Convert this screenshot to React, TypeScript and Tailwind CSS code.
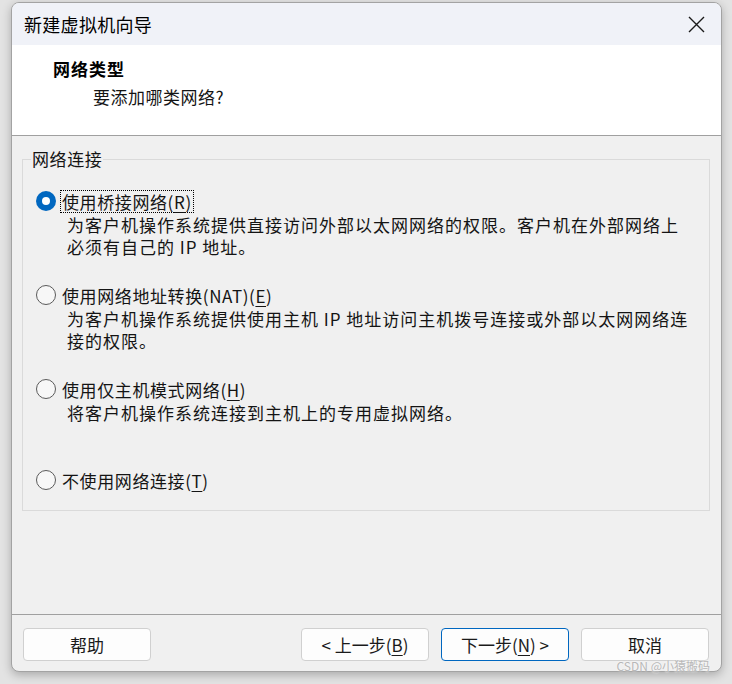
import React from 'react';

const font = { fontFamily: '"Noto Sans CJK SC", "Noto Sans", sans-serif' };

function Radio({ checked }: { checked?: boolean }) {
  if (checked) {
    return (
      <span className="w-[20px] h-[20px] rounded-full bg-[#0067c0] flex items-center justify-center shrink-0">
        <span className="w-[8px] h-[8px] rounded-full bg-white" />
      </span>
    );
  }
  return <span className="w-[20px] h-[20px] rounded-full border border-[#5a5a5a] bg-[#f7f7f7] shrink-0" />;
}

interface OptionProps {
  label: string;
  keyChar: string;
  checked?: boolean;
  focused?: boolean;
  lines?: string[];
}

function Option({ label, keyChar, checked, focused, lines }: OptionProps) {
  return (
    <div>
      <div className="flex items-center h-[22px] pl-[13px]">
        <Radio checked={checked} />
        <span
          className={
            'ml-[4px] px-[1px] leading-[21px] tracking-[0.6px] ' +
            (focused ? 'border border-dotted border-black' : 'border border-transparent')
          }
        >
          {label}(<span className="underline underline-offset-[3px]">{keyChar}</span>)
        </span>
      </div>
      {lines && (
        <div className="mt-[2px] pl-[44px] leading-[22px] tracking-[1px]">
          {lines.map((l, i) => (
            <React.Fragment key={l}>
              {i > 0 && <br />}
              {l}
            </React.Fragment>
          ))}
        </div>
      )}
    </div>
  );
}

function Button({ children, primary }: { children: React.ReactNode; primary?: boolean }) {
  return (
    <div
      className={
        'w-[128px] h-[33px] rounded-[4px] bg-[#fdfdfd] flex items-center justify-center text-[17px] text-[#1a1a1a] ' +
        (primary ? 'border border-[#0067c0]' : 'border border-[#d0d0d0]')
      }
    >
      {children}
    </div>
  );
}

export default function App() {
  return (
    <div className="relative w-[732px] h-[684px] bg-[#e3e3e3] pt-[2px] pl-[11px] overflow-hidden" style={font}>
      <div className="w-[711px] h-[670px] rounded-[8px] border border-[#a3a3a3] overflow-hidden flex flex-col bg-[#f0f0f0] shadow-[0_3px_10px_rgba(0,0,0,0.25)] text-[#141414]">
        {/* title bar */}
        <div className="h-[42px] bg-[#f0f2f8] flex items-center justify-between pl-[12px] pr-[16px]">
          <span className="text-[18px] tracking-[0.3px] text-black">新建虚拟机向导</span>
          <svg width="17" height="17" viewBox="0 0 17 17" className="mt-[1px]">
            <path d="M1 1 L16 16 M16 1 L1 16" stroke="#1a1a1a" strokeWidth="1.4" fill="none" />
          </svg>
        </div>

        {/* header */}
        <div className="h-[91px] bg-white border-b border-[#a0a0a0] pt-[13px]">
          <div className="pl-[41px] leading-[22px] text-[17px] font-bold tracking-[1px] text-black">网络类型</div>
          <div className="pl-[81px] mt-[6px] leading-[22px] text-[17px] tracking-[0.5px]">要添加哪类网络?</div>
        </div>

        {/* body */}
        <div className="h-[478px] pt-[23px] pl-[10px] pr-[11px] text-[17px]">
          <div className="relative border border-[#dadada] pt-[30px] pb-[19px]">
            <span className="absolute -top-[12px] left-[8px] px-[1px] bg-[#f0f0f0] leading-[22px] tracking-[0.6px]">
              网络连接
            </span>
            <div className="flex flex-col">
              <Option
                label="使用桥接网络"
                keyChar="R"
                checked
                focused
                lines={['为客户机操作系统提供直接访问外部以太网网络的权限。客户机在外部网络上', '必须有自己的 IP 地址。']}
              />
              <div className="h-[26px]" />
              <Option
                label="使用网络地址转换(NAT)"
                keyChar="E"
                lines={['为客户机操作系统提供使用主机 IP 地址访问主机拨号连接或外部以太网网络连', '接的权限。']}
              />
              <div className="h-[26px]" />
              <Option label="使用仅主机模式网络" keyChar="H" lines={['将客户机操作系统连接到主机上的专用虚拟网络。']} />
              <div className="h-[45px]" />
              <Option label="不使用网络连接" keyChar="T" />
            </div>
          </div>
        </div>

        {/* footer */}
        <div className="flex-1 border-t border-[#a0a0a0] pt-[13px] pl-[11px] pr-[12px] flex items-start">
          <Button>帮助</Button>
          <div className="flex-1" />
          <div className="flex gap-[12px]">
            <Button>
              &lt;&nbsp;上一步(<span className="underline underline-offset-[3px]">B</span>)
            </Button>
            <Button primary>
              下一步(<span className="underline underline-offset-[3px]">N</span>)&nbsp;&gt;
            </Button>
            <Button>取消</Button>
          </div>
        </div>
      </div>

      <span className="absolute right-[22px] bottom-[9px] text-[12px] text-[#b8b8b8] [text-shadow:0_0_2px_#ffffff]">
        CSDN @小猿搬码
      </span>
    </div>
  );
}
